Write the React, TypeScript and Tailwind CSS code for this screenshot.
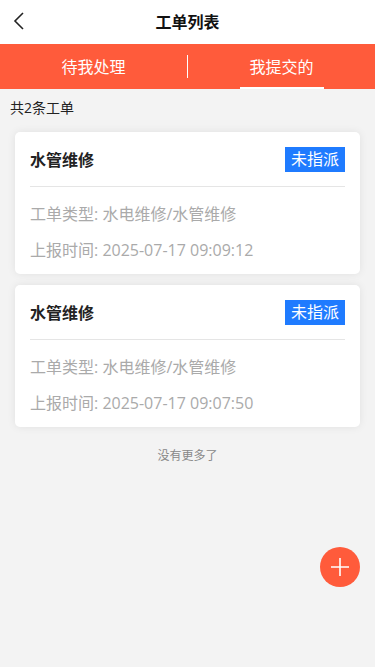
import React from 'react';

const font = { fontFamily: '"Open Sans", "Noto Sans CJK SC", sans-serif' };

interface Order {
  title: string;
  type: string;
  time: string;
}

const orders: Order[] = [
  { title: '水管维修', type: '水电维修/水管维修', time: '2025-07-17 09:09:12' },
  { title: '水管维修', type: '水电维修/水管维修', time: '2025-07-17 09:07:50' },
];

const OrderCard: React.FC<{ order: Order }> = ({ order }) => (
  <div className="bg-white rounded-[5px] shadow-[0_0_8px_rgba(0,0,0,0.08)] px-[15px]">
    <div className="flex items-center justify-between h-[55px] border-b border-[#e5e5e5]">
      <span className="text-[16px] font-bold text-[#222] pt-[2px]">{order.title}</span>
      <span className="bg-[#1f7bff] text-white text-[16px] leading-[25px] h-[25px] px-[6px]">未指派</span>
    </div>
    <div className="pt-[16px] pb-[13px] text-[16px] text-[#aaaaaa] leading-[22px]">
      <div>工单类型: {order.type}</div>
      <div className="mt-[14px]">上报时间: {order.time}</div>
    </div>
  </div>
);

export default function App() {
  return (
    <div className="w-[375px] h-[667px] bg-[#f3f3f3] flex flex-col relative" style={font}>
      <div className="h-[44px] bg-white flex items-center relative shrink-0">
        <svg className="absolute left-[12px] top-[11px]" width="14" height="20" viewBox="0 0 14 20" fill="none">
          <path d="M11 2 L3 10 L11 18" stroke="#222" strokeWidth="1.6" />
        </svg>
        <div className="flex-1 text-center text-[16px] font-bold text-[#111]">工单列表</div>
      </div>
      <div className="h-[45px] bg-[#ff5b3b] flex items-stretch shrink-0">
        <div className="flex-1 flex items-center justify-center text-white text-[16px]">待我处理</div>
        <div className="w-px bg-white my-[11px]" />
        <div className="flex-1 flex items-center justify-center relative text-white text-[16px]">
          我提交的
          <div className="absolute bottom-0 left-1/2 -translate-x-1/2 w-[84px] h-[2px] bg-white" />
        </div>
      </div>
      <div className="text-[14px] text-[#222] px-[10px] pt-[10px] leading-[18px]">共2条工单</div>
      <div className="px-[15px] pt-[15px] flex flex-col gap-[11px]">
        {orders.map((o, i) => (
          <OrderCard key={i} order={o} />
        ))}
      </div>
      <div className="text-center text-[12px] text-[#888] mt-[20px]">没有更多了</div>
      <div className="absolute left-[320px] top-[547px] w-[40px] h-[40px] rounded-full bg-[#ff5b3b] flex items-center justify-center">
        <svg width="20" height="20" viewBox="0 0 20 20">
          <path d="M10 1 V19 M1 10 H19" stroke="white" strokeWidth="1.6" />
        </svg>
      </div>
    </div>
  );
}
